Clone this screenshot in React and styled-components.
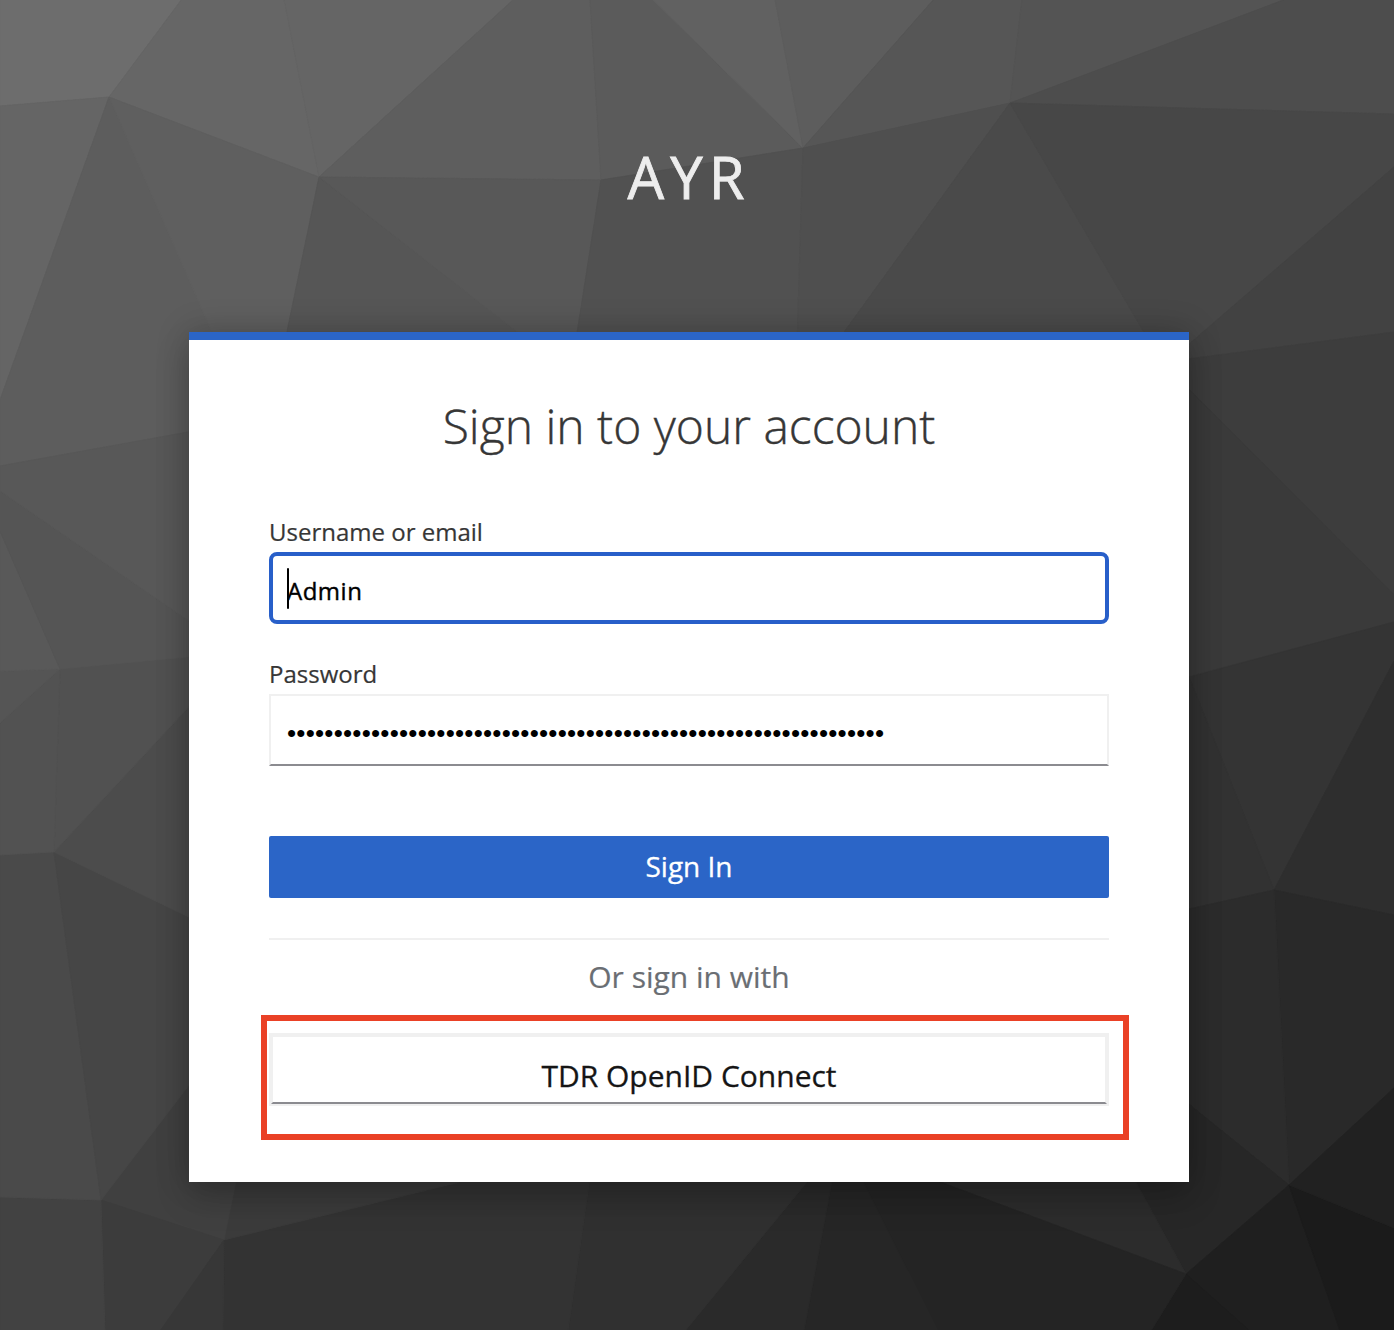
import React from "react";
import styled, { createGlobalStyle } from "styled-components";

const GlobalStyle = createGlobalStyle`
  *, *::before, *::after { box-sizing: border-box; }
  body { margin: 0; background: #444; font-family: "Open Sans", "Noto Sans", sans-serif; }
`;

const Page = styled.main`
  position: relative;
  width: 1394px;
  height: 1330px;
  overflow: hidden;
  padding-left: 189px;
`;

const Backdrop = styled.svg`
  position: absolute;
  inset: 0;
  z-index: -1;
  display: block;
`;

const Brand = styled.header`
  width: 1000px;
  height: 332px;
  padding-top: 137px;
  color: #ededed;
  font-size: 58px;
  line-height: 80px;
  letter-spacing: 6px;
  text-align: center;
  text-transform: uppercase;
  -webkit-text-stroke: 0.8px #ededed;
`;

const Card = styled.section`
  display: flex;
  flex-direction: column;
  width: 1000px;
  height: 850px;
  padding: 51px 80px 0;
  border-top: 8px solid #2b65c7;
  background: #fff;
  box-shadow: 0 16px 32px rgba(3, 3, 3, 0.18), 0 0 32px rgba(3, 3, 3, 0.2);
`;

const Title = styled.h1`
  margin: 0 0 53px;
  color: #363636;
  font-size: 48px;
  font-weight: 300;
  line-height: 70px;
  text-align: center;
  -webkit-text-stroke: 0.4px #363636;
`;

const Field = styled.div`
  position: relative;
  display: flex;
  flex-direction: column;
  height: 142px;
`;

const Label = styled.label`
  height: 38px;
  color: #363636;
  font-size: 24px;
  line-height: 36px;
  -webkit-text-stroke: 0.2px #363636;
`;

const Input = styled.input`
  width: 840px;
  height: 72px;
  outline: none;
  background: #fff;
  color: #000;
  font-family: ${(p) => (p.type === "password" ? '"Liberation Sans", Arial' : '"Open Sans"')}, sans-serif;
  font-size: ${(p) => (p.type === "password" ? "26px" : "24px")};
  letter-spacing: ${(p) => (p.type === "password" ? "0.23px" : "0.5px")};
  -webkit-text-stroke: ${(p) => (p.$active ? "0.4px #000" : "0")};
  border-style: solid;
  border-width: ${(p) => (p.$active ? "4px" : "2px")};
  border-color: ${(p) => (p.$active ? "#285fc9" : "#f0f0f0 #f0f0f0 #8b8b90")};
  border-radius: ${(p) => (p.$active ? "8px" : "0")};
  padding: ${(p) => (p.$active ? "5px 14px 0" : "6px 16px 0")};
`;

const Caret = styled.span`
  position: absolute;
  left: 18px;
  top: 54px;
  width: 2px;
  height: 41px;
  border-radius: 1px;
  background: #000;
`;

const SubmitButton = styled.button`
  height: 62px;
  margin-top: 38px;
  padding: 0;
  border: 0;
  border-radius: 2px;
  background: #2b65c7;
  color: #fff;
  font: 400 28px/60px "Open Sans", sans-serif;
  padding-bottom: 2px;
  -webkit-text-stroke: 0.3px #fff;
`;

const Divider = styled.hr`
  width: 100%;
  height: 2px;
  margin: 40px 0 16px;
  border: 0;
  background: #f0f0f0;
`;

const ProviderHeading = styled.h2`
  margin: 0 0 35px;
  color: #6a6e73;
  font-size: 30px;
  font-weight: 400;
  line-height: 42px;
  text-align: center;
  -webkit-text-stroke: 0.2px #6a6e73;
`;

const ProviderArea = styled.div`
  position: relative;
`;

const ProviderButton = styled.button`
  display: block;
  width: 840px;
  height: 73px;
  padding: 0;
  border: 2px solid #f0f0f0;
  background: #f0f0f0;
`;

const ProviderName = styled.span`
  display: block;
  height: 69px;
  border: 2px solid #f0f0f0;
  border-bottom-color: #8b8b90;
  background: #fff;
  color: #151515;
  font: 400 30px/78px "Open Sans", sans-serif;
  -webkit-text-stroke: 0.3px #151515;
`;

const Highlight = styled.div`
  position: absolute;
  left: -8px;
  top: -18px;
  width: 868px;
  height: 125px;
  border: 6px solid #ea4126;
  pointer-events: none;
`;

/* Low-poly backdrop: fill and corner points of every facet. */
const facets = [
  ["#6d6d6d", "0,-2 182,-2 109,96 0,105"],
  ["#666666", "182,-2 284,-2 319,176 109,96"],
  ["#656565", "284,-2 514,-2 319,176"],
  ["#5e5e5e", "514,-2 590,-2 601,179 319,176"],
  ["#5b5b5b", "590,-2 652,-2 803,147 601,179"],
  ["#616161", "652,-2 775,-2 803,147"],
  ["#5d5d5d", "775,-2 934,-2 803,147"],
  ["#565656", "934,-2 1022,-2 1010,102 803,147"],
  ["#545454", "1022,-2 1286,-2 1010,102"],
  ["#4d4d4d", "1286,-2 1394,-2 1394,113 1010,102"],
  ["#656565", "0,105 109,96 0,399"],
  ["#5d5d5d", "109,96 218,335 240,420 189,431 0,465 0,399"],
  ["#5f5f5f", "109,96 319,176 284,345 218,345"],
  ["#565656", "319,176 523,335 284,345"],
  ["#585858", "319,176 601,179 575,345 535,345"],
  ["#515151", "601,179 803,147 797,345 575,345"],
  ["#4f4f4f", "803,147 1010,102 834,345 797,345"],
  ["#4a4a4a", "1010,102 1152,345 834,345"],
  ["#474747", "1010,102 1394,113 1394,166 1189,344 1152,345"],
  ["#424242", "1394,166 1189,343 1180,359 1394,331"],
  ["#3d3d3d", "1180,359 1394,331 1394,594 1180,379"],
  ["#3a3a3a", "1180,379 1394,594 1394,621 1180,678"],
  ["#343434", "1189,676 1394,621 1394,660 1274,889"],
  ["#323232", "1180,678 1189,676 1274,889 1180,910"],
  ["#2e2e2e", "1274,889 1394,660 1394,914"],
  ["#292929", "1274,889 1394,914 1394,1087 1289,1184"],
  ["#2c2c2c", "1274,889 1289,1184 1180,1096 1180,910"],
  ["#272727", "1289,1184 1180,1096 1130,1170 1136,1182 1186,1273"],
  ["#1f1f1f", "1186,1273 1289,1184 1340,1330 1151,1330"],
  ["#1d1d1d", "1186,1273 1250,1330 1151,1330"],
  ["#1b1b1b", "1289,1184 1394,1227 1394,1330 1340,1330"],
  ["#212121", "1289,1184 1394,1087 1394,1227"],
  ["#2c2c2c", "1186,1273 1130,1170 911,1170"],
  ["#242424", "1186,1273 911,1170 858,1170 938,1330 1151,1330"],
  ["#262626", "834,1170 858,1170 938,1330 804,1330"],
  ["#2a2a2a", "816,1170 834,1170 804,1330 685,1330"],
  ["#303030", "591,1170 816,1170 685,1330 568,1330"],
  ["#333333", "224,1239 483,1170 591,1170 568,1330 223,1330"],
  ["#3b3b3b", "224,1239 238,1170 483,1170 460,1181"],
  ["#404040", "101,1199 199,1071 238,1170 224,1239"],
  ["#3c3c3c", "101,1199 224,1239 160,1330 105,1330"],
  ["#373737", "224,1239 223,1330 160,1330"],
  ["#424242", "0,1196 101,1199 105,1330 0,1330"],
  ["#4a4a4a", "0,854 54,851 101,1199 0,1196"],
  ["#464646", "54,851 199,921 199,1071 101,1199"],
  ["#4c4c4c", "54,851 199,695 199,921"],
  ["#515151", "60,668 199,655 199,695 54,851"],
  ["#525252", "60,668 54,851 0,854 0,722"],
  ["#555555", "60,668 0,722 0,670"],
  ["#595959", "0,530 60,668 0,670"],
  ["#555555", "0,490 199,627 199,655 60,668 0,530"],
  ["#585858", "0,465 199,429 199,627 0,490"],
];

export default function App() {
  return (
    <Page>
      <GlobalStyle />
      <Backdrop width="1394" height="1330" viewBox="0 0 1394 1330" aria-hidden="true">
        <g transform="translate(0 1)">
          {facets.map(([fill, points], i) => (
            <polygon key={i} points={points} fill={fill} stroke={fill} strokeWidth="0.8" />
          ))}
        </g>
      </Backdrop>
      <Brand>AYR</Brand>
      <Card>
        <Title>Sign in to your account</Title>
        <Field>
          <Label htmlFor="username">Username or email</Label>
          <Input id="username" type="text" value="Admin" readOnly $active />
          <Caret />
        </Field>
        <Field>
          <Label htmlFor="password">Password</Label>
          <Input id="password" type="password" value={"x".repeat(64)} readOnly />
        </Field>
        <SubmitButton>Sign In</SubmitButton>
        <Divider />
        <ProviderHeading>Or sign in with</ProviderHeading>
        <ProviderArea>
          <ProviderButton>
            <ProviderName>TDR OpenID Connect</ProviderName>
          </ProviderButton>
          <Highlight />
        </ProviderArea>
      </Card>
    </Page>
  );
}
